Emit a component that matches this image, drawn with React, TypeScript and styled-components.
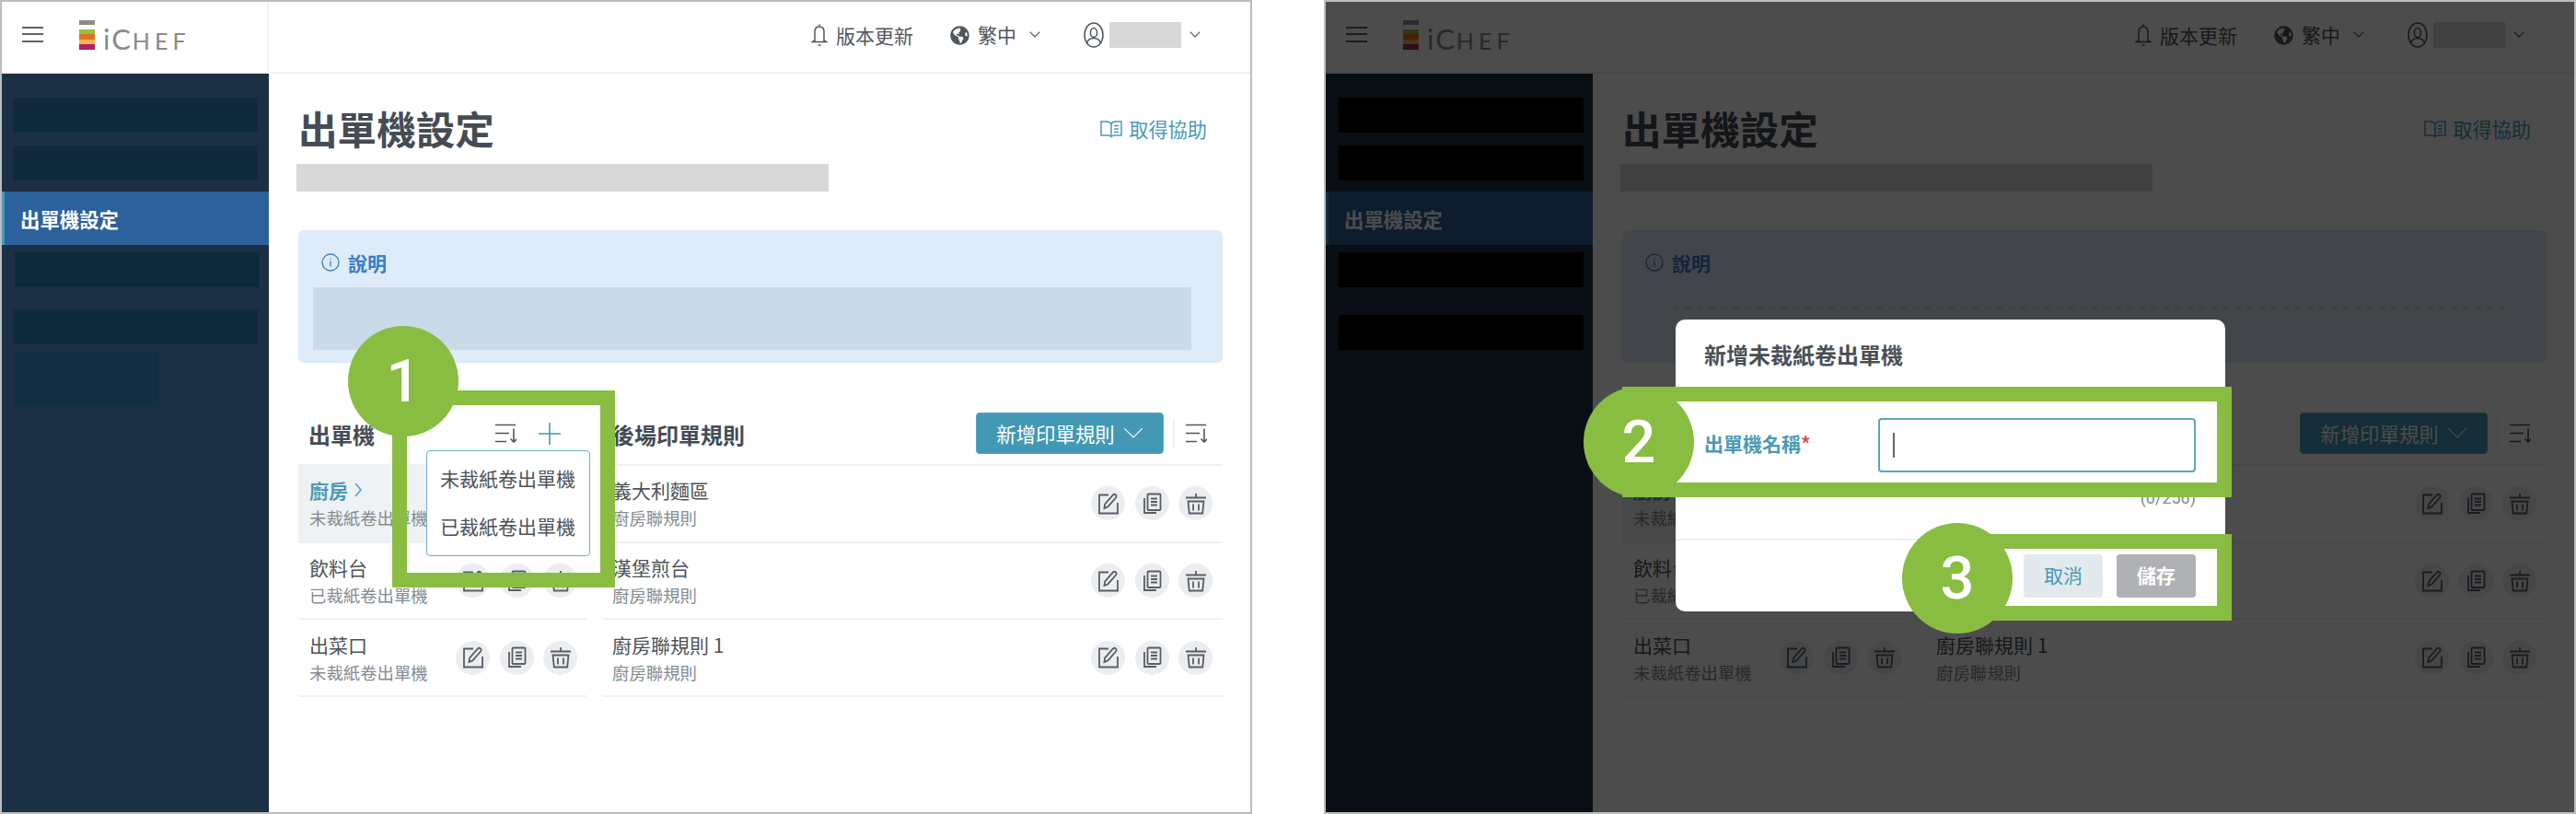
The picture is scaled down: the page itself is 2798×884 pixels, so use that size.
import React from 'react'
import styled, { createGlobalStyle } from 'styled-components'
import { FaGlobeAmericas } from 'react-icons/fa'

const GREEN = '#89bd41'
const TEAL = '#4398b6'
const CJK = '"Noto Sans CJK TC", "Noto Sans", sans-serif'

const GlobalStyle = createGlobalStyle`
    html, body {
        margin: 0;
        padding: 0;
        background: #fff;
    }
    * {
        box-sizing: border-box;
    }
`

const Page = styled.div`
    width: 2798px;
    height: 884px;
    display: flex;
    gap: 78px;
    overflow: hidden;
    font-family: ${CJK};
`

const Panel = styled.div`
    position: relative;
    flex: none;
    width: 1360px;
    height: 884px;
    border: 2px solid #bdbdbd;
    background: #fff;
    overflow: hidden;
    display: grid;
    grid-template-columns: 290px 1fr;
    grid-template-rows: 78px 1fr;
`

/* ---------- header ---------- */
const BrandCell = styled.div`
    display: flex;
    align-items: center;
    padding-left: 22px;
    border-right: 2px solid #f3f3f3;
    border-bottom: 2px solid #f1f1f1;
`

const Burger = styled.div`
    width: 23px;
    height: 17px;
    display: flex;
    flex-direction: column;
    justify-content: space-between;
    margin-top: -6px;
    i {
        display: block;
        height: 2px;
        background: #5f6368;
    }
`

const Logo = styled.div`
    margin-left: 39px;
    display: flex;
    align-items: flex-end;
    gap: 9px;
    height: 32px;
    margin-top: -5px;
`

const LogoMark = styled.div`
    width: 17px;
    display: flex;
    flex-direction: column;
`

const Stripe = styled.i<{ $c: string; $h: number; $gap?: number }>`
    display: block;
    background: ${p => p.$c};
    height: ${p => p.$h}px;
    margin-bottom: ${p => p.$gap || 0}px;
`

const LogoText = styled.div`
    font-family: Lato, sans-serif;
    font-weight: 400;
    color: #8a8a8a;
    line-height: 23px;
    height: 23px;
    font-size: 25px;
    letter-spacing: 5px;
    white-space: nowrap;
    span {
        font-size: 31px;
        letter-spacing: 2px;
    }
`

const TopBar = styled.div`
    display: flex;
    align-items: center;
    justify-content: flex-end;
    padding-right: 54px;
    border-bottom: 2px solid #f1f1f1;
    color: #50565c;
    font-size: 21px;
`

const TopItem = styled.div<{ $ml?: number }>`
    display: flex;
    align-items: center;
    margin-left: ${p => p.$ml || 0}px;
    margin-top: -4px;
    span {
        line-height: 30px;
    }
`

const Redacted = styled.div`
    width: 78px;
    height: 28px;
    margin: 0 9px 0 6px;
    background: #d8d8d8;
`

/* ---------- sidebar ---------- */
const Sidebar = styled.nav`
    background: #1b3045;
    padding-top: 26px;
    display: flex;
    flex-direction: column;
`

const NavBlock = styled.div<{ $dark?: boolean; $ml: number; $mt: number; $h?: number; $w?: number; $c?: string }>`
    height: ${p => p.$h || 38}px;
    width: ${p => p.$w || 266}px;
    margin-left: ${p => p.$ml}px;
    margin-top: ${p => p.$mt}px;
    background: ${p => (p.$dark ? '#000' : p.$c || '#102a3d')};
`

const NavActive = styled.div`
    height: 58px;
    margin-top: 12px;
    border-left: 3px solid #4a9ab5;
    background: #2d619c;
    color: #fff;
    font-size: 21.4px;
    font-weight: 700;
    display: flex;
    align-items: center;
    padding-left: 17px;
`

/* ---------- main ---------- */
const Main = styled.main`
    padding: 38px 30px 0 32px;
    min-width: 0;
`

const TitleRow = styled.div`
    display: flex;
    justify-content: space-between;
    align-items: center;
    padding-right: 17px;
    height: 44px;
`

const Title = styled.h1`
    margin: -3px 0 0;
    font-size: 42.6px;
    line-height: 44px;
    font-weight: 700;
    color: #454c54;
`

const HelpLink = styled.a`
    display: flex;
    align-items: center;
    gap: 7px;
    font-size: 21.2px;
    line-height: 30px;
    color: #4a9ab5;
`

const SubBar = styled.div`
    width: 578px;
    height: 30px;
    margin: 16px 0 0 -2px;
    background: #d8d8d8;
`

const InfoBox = styled.section`
    height: 144px;
    margin-top: 42px;
    padding: 20px 34px 14px 16px;
    background: #deebf8;
    border-radius: 6px;
`

const InfoTitle = styled.div`
    height: 30px;
    margin-bottom: 12px;
    display: flex;
    align-items: center;
    gap: 9px;
    padding-left: 9px;
    color: #3a7cc8;
    font-size: 21px;
    font-weight: 700;
`

const InfoBody = styled.div<{ $dark?: boolean }>`
    height: 68px;
    margin: ${p => (p.$dark ? '0 12px 0 39px' : '0')};
    background: ${p => (p.$dark
        ? 'repeating-linear-gradient(90deg, rgba(0,0,0,.09) 0 7px, transparent 7px 13px) 0 21px / 100% 3px no-repeat'
        : '#cbdae8')};
`

const Columns = styled.div`
    display: flex;
    gap: 17px;
`

const PrinterColumn = styled.div`
    flex: none;
    width: 313px;
`

const RuleColumn = styled.div`
    flex: 1;
    min-width: 0;
`

const ColumnHead = styled.div`
    height: 45px;
    margin: 54px 0 11px;
    display: flex;
    align-items: center;
    justify-content: space-between;
`

const ColumnTitle = styled.h2`
    margin: 2px 0 0 11px;
    font-size: 24px;
    line-height: 34px;
    font-weight: 700;
    color: #434c56;
`

const HeadTools = styled.div<{ $gap?: number; $mr: number }>`
    display: flex;
    align-items: center;
    gap: ${p => p.$gap || 0}px;
    margin-right: ${p => p.$mr}px;
`

const AddRuleButton = styled.button`
    width: 204px;
    height: 45px;
    border: 1px solid #5ba6c0;
    border-radius: 4px;
    background: ${TEAL};
    color: #fff;
    font-family: ${CJK};
    font-size: 21.4px;
    display: flex;
    align-items: center;
    justify-content: center;
    gap: 9px;
    padding: 0;
`

const ToolDivider = styled.i`
    display: block;
    width: 2px;
    height: 32px;
    margin: 0 11px 0 10px;
    background: #eef0f2;
`

const List = styled.ul`
    margin: 0;
    padding: 0;
    list-style: none;
    border-top: 2px solid #f0f1f3;
`

const Row = styled.li<{ $active?: boolean; $pl: number; $pr: number }>`
    height: 83.7px;
    display: flex;
    justify-content: space-between;
    align-items: center;
    padding: 0 ${p => p.$pr}px 0 ${p => p.$pl}px;
    border-bottom: 2px solid #f0f1f3;
    background: ${p => (p.$active ? '#eff2f4' : 'transparent')};
`

const RowText = styled.div`
    padding-top: 1px;
    min-width: 0;
    white-space: nowrap;
`

const RowName = styled.div<{ $active?: boolean }>`
    display: flex;
    align-items: center;
    gap: 7px;
    height: 30px;
    font-size: 21px;
    line-height: 30px;
    font-weight: ${p => (p.$active ? 700 : 400)};
    color: ${p => (p.$active ? '#4a9ab5' : '#4c5258')};
`

const RowSub = styled.div`
    height: 30px;
    font-size: 18.4px;
    line-height: 30px;
    color: #858b91;
`

const RowActions = styled.div`
    flex: none;
    display: flex;
    gap: 10.5px;
`

const RoundIcon = styled.span`
    width: 37px;
    height: 37px;
    border-radius: 50%;
    background: #ebedf1;
    display: flex;
    align-items: center;
    justify-content: center;
    color: #595e64;
`

/* ---------- things lying over the page ---------- */
const Backdrop = styled.div`
    position: absolute;
    inset: 0;
    background: rgba(0, 0, 0, 0.7);
`

const Frame = styled.div<{ $l: number; $t: number; $w: number; $h: number }>`
    position: absolute;
    left: ${p => p.$l}px;
    top: ${p => p.$t}px;
    width: ${p => p.$w}px;
    height: ${p => p.$h}px;
    border: 16px solid ${GREEN};
`

const Badge = styled.div<{ $l: number; $t: number }>`
    position: absolute;
    left: ${p => p.$l}px;
    top: ${p => p.$t}px;
    width: 120px;
    height: 120px;
    border-radius: 50%;
    background: ${GREEN};
    color: #fff;
    font-family: Roboto, sans-serif;
    font-weight: 500;
    font-size: 65px;
    line-height: 120px;
    text-align: center;
`

const Dropdown = styled.div`
    position: absolute;
    left: 460.5px;
    top: 487px;
    width: 178px;
    height: 115px;
    padding-bottom: 3px;
    background: #fff;
    border: 1.5px solid #6fb0c8;
    border-radius: 4px;
    display: flex;
    flex-direction: column;
    justify-content: center;
    align-items: center;
    gap: 22px;
    color: #4c5258;
    font-size: 21px;
    line-height: 30px;
`

const Modal = styled.div`
    position: absolute;
    left: 380px;
    top: 345px;
    width: 597px;
    height: 317px;
    background: #fff;
    border-radius: 10px;
    display: flex;
    flex-direction: column;
`

const ModalTitle = styled.h3`
    margin: 0;
    height: 78px;
    padding-left: 31px;
    font-size: 24px;
    line-height: 76px;
    font-weight: 700;
    color: #4a4f55;
`

const ModalBody = styled.div`
    height: 162px;
    padding: 29px 32px 0 31px;
    border-bottom: 2px solid #eeeeee;
`

const FieldRow = styled.div`
    display: flex;
    align-items: flex-start;
`

const FieldLabel = styled.label`
    flex: none;
    width: 189px;
    font-size: 21px;
    line-height: 30px;
    margin-top: 12px;
    font-weight: 700;
    color: #4a9ab5;
    em {
        font-style: normal;
        color: #d9534f;
    }
`

const Input = styled.div`
    flex: 1;
    height: 59px;
    border: 2px solid #5ba4c0;
    border-radius: 4px;
    padding: 14px 0 0 14px;
    i {
        display: block;
        width: 2px;
        height: 27px;
        background: #666;
    }
`

const Counter = styled.div`
    margin-top: 13px;
    text-align: right;
    font-family: Roboto, sans-serif;
    font-size: 18px;
    line-height: 30px;
    color: #858b91;
`

const ModalFooter = styled.div`
    flex: 1;
    display: flex;
    justify-content: flex-end;
    gap: 15px;
    padding: 15px 32px 0 0;
`

const ModalButton = styled.button<{ $primary?: boolean }>`
    width: 86px;
    height: 47px;
    border: 0;
    border-radius: 4px;
    padding: 0 0 4px;
    font-family: ${CJK};
    font-size: 21px;
    font-weight: ${p => (p.$primary ? 700 : 400)};
    background: ${p => (p.$primary ? '#b0b1b5' : '#e2eaed')};
    color: ${p => (p.$primary ? '#fff' : '#4a9ab5')};
`

/* ---------- icons ---------- */
const Svg = styled.svg`
    display: block;
    flex: none;
    fill: none;
    stroke: currentColor;
`

const EditIcon = () => (
    <Svg width="24" height="24" viewBox="0 0 24 24" strokeWidth="1.8">
        <path d="M12 2.5H2v20h20V11" />
        <path d="M7.5 17l.7-4.6 8.6-9.7c.9-1 2.2-1.1 3.1-.3.9.8 1 2.1.1 3.1l-8.5 9.700z" />
    </Svg>
)

const CopyIcon = () => (
    <Svg width="24" height="24" viewBox="0 0 24 24" strokeWidth="1.8">
        <rect x="7.5" y="1.5" width="14" height="17.5" rx="1" />
        <path d="M4 6v16h13" />
        <path d="M11 6.5h7M11 10h7M11 13.5h7" />
    </Svg>
)

const TrashIcon = () => (
    <Svg width="24" height="24" viewBox="0 0 24 24" strokeWidth="1.8">
        <path d="M1 5.500h22M12 1v4.500" />
        <path d="M3.500 9.500h17l-1.300 13H4.800z" />
        <path d="M9 12.500v7M15 12.500v7" />
    </Svg>
)

const SortIcon = () => (
    <Svg width="24" height="21" viewBox="0 0 24 21" strokeWidth="1.6" color="#50565c">
        <path d="M1 1.500h22M1 10.500h15M1 19.500h12" />
        <path d="M21 5.500v14.500M17.500 16.500l3.500 3.500 3.500-3.500" />
    </Svg>
)

const PlusIcon = () => (
    <Svg width="24" height="24" viewBox="0 0 24 24" strokeWidth="1.6" color={TEAL}>
        <path d="M12 0v24M0 12h24" />
    </Svg>
)

const Chevron = ({ w = 12 }: { w?: number }) => (
    <Svg width={w} height={w * 0.6} viewBox="0 0 20 12" strokeWidth={24 / w}>
        <path d="M1 1l9 9 9-9" />
    </Svg>
)

const RightChevron = () => (
    <Svg width="8" height="16" viewBox="0 0 8 16" strokeWidth="1.4">
        <path d="M1 1l6 7-6 7" />
    </Svg>
)

const BellIcon = () => (
    <Svg width="18" height="26" viewBox="0 0 18 26" strokeWidth="1.5">
        <path d="M9 1.500v2.500M4 19V9.500C4 6 6 4 9 4s5 2 5 5.500V19l2.500 1.500h-15z" />
        <path d="M7.500 24h3" />
    </Svg>
)

const UserIcon = () => (
    <Svg width="22" height="28" viewBox="0 0 22 28" strokeWidth="1.5">
        <ellipse cx="11" cy="14" rx="10" ry="13" />
        <ellipse cx="11" cy="11.500" rx="3.600" ry="5" />
        <path d="M3.500 23c1-4 4-5.500 7.500-5.500s6.500 1.500 7.500 5.500" />
    </Svg>
)

const BookIcon = () => (
    <Svg width="24" height="19" viewBox="0 0 24 19" strokeWidth="1.5">
        <path d="M12 4v13.500M12 4c-1-2-3-3-5-3H1v15h7c2 0 3 .5 4 1.500 1-1 2-1.500 4-1.500h7V1h-7c-2 0-3 1-4 3z" />
        <path d="M15 5.500h5M15 9h5M15 12.500h5" />
    </Svg>
)

const InfoIcon = () => (
    <Svg width="20" height="20" viewBox="0 0 20 20" strokeWidth="1.3">
        <circle cx="10" cy="10" r="9" />
        <path d="M10 8.500v6M10 5.500v1.200" />
    </Svg>
)

const BellLabel = styled.span`
    margin-left: 9px;
`

const LangLabel = styled.span`
    margin: -3px 14px 0 9px;
`

/* ---------- data ---------- */
const printers = [
    { name: '廚房', sub: '未裁紙卷出單機', active: true },
    { name: '飲料台', sub: '已裁紙卷出單機' },
    { name: '出菜口', sub: '未裁紙卷出單機' },
]

const rules = [
    { name: '義大利麵區', sub: '廚房聯規則' },
    { name: '漢堡煎台', sub: '廚房聯規則' },
    { name: '廚房聯規則 1', sub: '廚房聯規則' },
]

const Actions = () => (
    <RowActions>
        <RoundIcon><EditIcon /></RoundIcon>
        <RoundIcon><CopyIcon /></RoundIcon>
        <RoundIcon><TrashIcon /></RoundIcon>
    </RowActions>
)

const Console: React.FC<{ dark?: boolean }> = ({ dark }) => (
    <>
        <BrandCell>
            <Burger><i /><i /><i /></Burger>
            <Logo>
                <LogoMark>
                    <Stripe $c="#8c8c8c" $h={5} $gap={5} />
                    <Stripe $c="#93c13e" $h={5} />
                    <Stripe $c="#e36f26" $h={6} />
                    <Stripe $c="#f2b64a" $h={5} />
                    <Stripe $c="#ae1f63" $h={6} />
                </LogoMark>
                <LogoText><span>iC</span>HEF</LogoText>
            </Logo>
        </BrandCell>
        <TopBar>
            <TopItem><BellIcon /><BellLabel>版本更新</BellLabel></TopItem>
            <TopItem $ml={40}>
                <FaGlobeAmericas size={21} />
                <LangLabel>繁中</LangLabel>
                <Chevron />
            </TopItem>
            <TopItem $ml={47}>
                <UserIcon />
                <Redacted />
                <Chevron />
            </TopItem>
        </TopBar>
        <Sidebar>
            <NavBlock $dark={dark} $ml={dark ? 14 : 12} $mt={0} />
            <NavBlock $dark={dark} $ml={dark ? 14 : 12} $mt={14} />
            <NavActive>出單機設定</NavActive>
            <NavBlock $dark={dark} $ml={14} $mt={8} />
            <NavBlock $dark={dark} $ml={dark ? 14 : 12} $mt={dark ? 30 : 24} />
            {!dark && <NavBlock $ml={14} $mt={8} $h={60} $w={157} $c="#112e43" />}
        </Sidebar>
        <Main>
            <TitleRow>
                <Title>出單機設定</Title>
                <HelpLink><BookIcon />取得協助</HelpLink>
            </TitleRow>
            <SubBar />
            <InfoBox>
                <InfoTitle><InfoIcon />說明</InfoTitle>
                <InfoBody $dark={dark} />
            </InfoBox>
            <Columns>
                <PrinterColumn>
                    <ColumnHead>
                        <ColumnTitle>出單機</ColumnTitle>
                        <HeadTools $gap={24} $mr={28}>
                            <SortIcon />
                            <PlusIcon />
                        </HeadTools>
                    </ColumnHead>
                    <List>
                        {printers.map(p => (
                            <Row key={p.name} $active={p.active} $pl={12} $pr={10}>
                                <RowText>
                                    <RowName $active={p.active}>
                                        {p.name}
                                        {p.active && <RightChevron />}
                                    </RowName>
                                    <RowSub>{p.sub}</RowSub>
                                </RowText>
                                <Actions />
                            </Row>
                        ))}
                    </List>
                </PrinterColumn>
                <RuleColumn>
                    <ColumnHead>
                        <ColumnTitle>後場印單規則</ColumnTitle>
                        <HeadTools $mr={17}>
                            <AddRuleButton>新增印單規則<Chevron w={22} /></AddRuleButton>
                            <ToolDivider />
                            <SortIcon />
                        </HeadTools>
                    </ColumnHead>
                    <List>
                        {rules.map(r => (
                            <Row key={r.name} $pl={11} $pr={11}>
                                <RowText>
                                    <RowName>{r.name}</RowName>
                                    <RowSub>{r.sub}</RowSub>
                                </RowText>
                                <Actions />
                            </Row>
                        ))}
                    </List>
                </RuleColumn>
            </Columns>
        </Main>
    </>
)

const App: React.FC = () => (
    <Page>
        <GlobalStyle />
        <Panel>
            <Console />
            <Dropdown>
                <div>未裁紙卷出單機</div>
                <div>已裁紙卷出單機</div>
            </Dropdown>
            <Frame $l={424} $t={422} $w={242} $h={214} />
            <Badge $l={376} $t={352}>1</Badge>
        </Panel>
        <Panel>
            <Console dark />
            <Backdrop />
            <Modal>
                <ModalTitle>新增未裁紙卷出單機</ModalTitle>
                <ModalBody>
                    <FieldRow>
                        <FieldLabel>出單機名稱<em>*</em></FieldLabel>
                        <Input><i /></Input>
                    </FieldRow>
                    <Counter>(0/256)</Counter>
                </ModalBody>
                <ModalFooter>
                    <ModalButton>取消</ModalButton>
                    <ModalButton $primary>儲存</ModalButton>
                </ModalFooter>
            </Modal>
            <Frame $l={322} $t={418} $w={662} $h={120} />
            <Frame $l={690} $t={578} $w={294} $h={94} />
            <Badge $l={280} $t={418}>2</Badge>
            <Badge $l={626} $t={566}>3</Badge>
        </Panel>
    </Page>
)

export default App
